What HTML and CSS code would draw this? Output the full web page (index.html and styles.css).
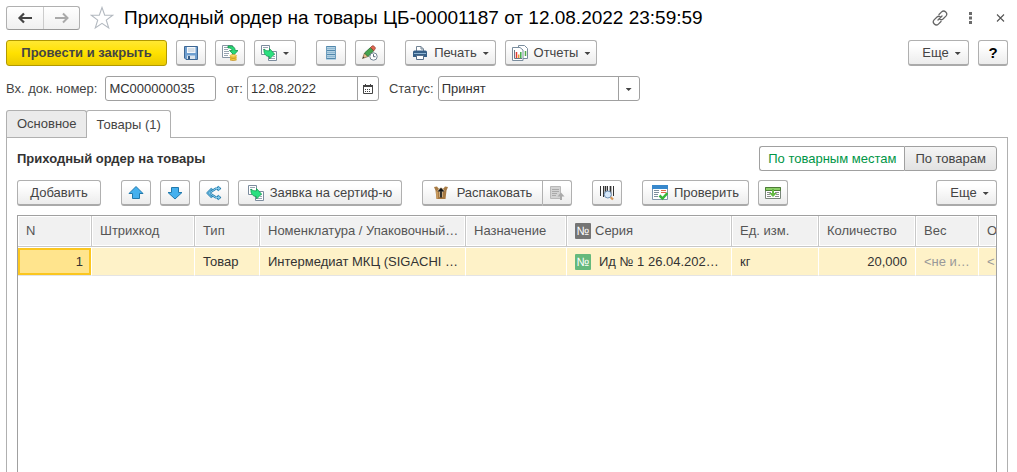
FILE: index.html
```html
<!DOCTYPE html>
<html lang="ru">
<head>
<meta charset="utf-8">
<title>Приходный ордер на товары</title>
<link rel="stylesheet" href="styles.css">
</head>
<body>
<svg class="sprites" aria-hidden="true">
  <symbol id="copy-docs" viewBox="0 0 16 16">
    <path d="M.5.5h8v9h-8zM7.500 6.500h8v9h-8z" fill="#fff" stroke="#7c8c9e"/>
    <path d="M2 2.500h5M2 4.500h2M12 9.500h2M12 11.500h2M9 13.500h5" stroke="#9aa7b4"/>
    <path d="M3 4c1.500 1.500 3 2 5.500 1.800V3.500l5 5.500-5 5v-2.500c-4 0-6-3-5.500-7.500z" fill="#2be080" stroke="#159c50" stroke-width=".8"/>
  </symbol>
</svg>

<header class="title-bar">
  <div class="nav">
    <button class="nav-btn" aria-label="Назад"><svg width="16" height="12" viewBox="0 0 16 12"><path d="M2.500 6H15M7 1.500L2.500 6 7 10.500" fill="none" stroke="#444" stroke-width="2.200"/></svg></button>
    <button class="nav-btn" aria-label="Вперед"><svg width="16" height="12" viewBox="0 0 16 12"><path d="M1 6h12.500M9 1.500L13.500 6 9 10.500" fill="none" stroke="#aaa" stroke-width="2"/></svg></button>
  </div>
  <button class="plain star" aria-label="Избранное"><svg width="24" height="24" viewBox="0 0 24 24"><path d="M12 1.500l2.700 7.700h8l-6.400 4.900 2.400 7.800L12 17.300l-6.700 4.600 2.400-7.800L1.300 9.200h8z" fill="#fff" stroke="#b3b9c0" stroke-width="1.100"/></svg></button>
  <h1 class="title">Приходный ордер на товары ЦБ-00001187 от 12.08.2022 23:59:59</h1>
  <div class="window-tools">
    <button class="plain" aria-label="Ссылка"><svg width="16" height="16" viewBox="0 0 16 16"><g fill="none" stroke="#666" stroke-width="1.300" stroke-linecap="round"><path d="M7 4.500l2.600-2.600c2.700-2.600 6.800 1.400 4.300 4.200L11 9c-1 .8-2 .9-3 .5M9 11.500l-2.600 2.600c-2.700 2.600-6.800-1.400-4.300-4.200L5 7c1-.8 2-.9 3-.5M6 10l4-4"/></g></svg></button>
    <button class="plain" aria-label="Меню"><svg width="16" height="16" viewBox="0 0 16 16"><path d="M7 2h3v3H7zM7 6.500h3v3H7zM7 11h3v3H7z" fill="#6b6b6b"/></svg></button>
    <button class="plain" aria-label="Закрыть"><svg width="16" height="16" viewBox="0 0 16 16"><path d="M5 4.500l7 7M12 4.500l-7 7" stroke="#555" stroke-width="1.100"/></svg></button>
  </div>
</header>

<div class="toolbar">
  <button class="btn primary">Провести и закрыть</button>
  <button class="btn icon" aria-label="Записать"><svg width="16" height="16" viewBox="0 0 16 16"><path d="M1.500 1.500h13v13h-11.500l-1.500-1.500z" fill="#6f9fd0" stroke="#3d6794"/><path d="M4 2h8.500v6H4z" fill="#f6f9fc"/><path d="M5 4h6.500M5 6h6.500" stroke="#b6c4d2"/><path d="M4 10.500h8V14H4z" fill="#dbe4ed"/><path d="M5 11h2v3H5z" fill="#355b85"/></svg></button>
  <button class="btn icon" aria-label="Провести"><svg width="16" height="16" viewBox="0 0 16 16"><path d="M.5.500h10v12H.5z" fill="#fff" stroke="#8795a3"/><path d="M2 2.500h4M2 4.500h4M2 6.500h5M2 8.500h5M2 10.500h4" stroke="#98a5b1"/><path d="M6 1c4-.5 7 .5 7.200 4.500H16L11.800 10 7.500 5.500H10c0-2-1.500-2.800-4-2.500z" fill="#28d876" stroke="#139248" stroke-width=".8"/><path d="M8 10.500h6.500v4.800H8z" fill="#f6cf3f"/><ellipse cx="11.200" cy="10.800" rx="3.300" ry="1.200" fill="#ffe271" stroke="#c99720" stroke-width=".6"/><path d="M8 12.800q3.200 1.500 6.500 0M8 14.800q3.200 1.500 6.500 0" fill="none" stroke="#c08c1b" stroke-width=".8"/></svg></button>
  <button class="btn icon-drop" aria-label="Создать на основании"><svg width="16" height="16"><use href="#copy-docs"/></svg><i class="caret"></i></button>
  <button class="btn icon group" aria-label="Структура"><svg width="16" height="16" viewBox="0 0 16 16"><path d="M3 1h10v14H3z" fill="#b4d2e4"/><path d="M3 1.500h10M3 5.500h10M3 9.500h10M3 13.500h10" stroke="#5288ac"/><path d="M3 3.500h10M3 7.500h10M3 11.500h10" stroke="#8fb8d2"/><path d="M3.500 1v13M12.500 1v13" stroke="#6d9dbd"/></svg></button>
  <button class="btn icon" aria-label="История"><svg width="16" height="16" viewBox="0 0 16 16"><path d="M.5 13.500L2.500 8 6 11.500z" fill="#e8be8b" stroke="#79603d" stroke-width=".7"/><path d="M2.500 8L8.500 2.500l3.300 3.300L6 11.500z" fill="#45a44e" stroke="#27672e" stroke-width=".8"/><path d="M8.500 2.500L10 1q1-.8 2 .2l1 1q.8 1 0 1.900l-1.200 1.700z" fill="#df6752" stroke="#8f3829" stroke-width=".7"/><path d="M.5 13.500l1-2 1 1z" fill="#333"/><circle cx="11.500" cy="11.500" r="3.700" fill="#fff" stroke="#718394"/><path d="M11.500 9.200v2.500h2" fill="none" stroke="#566878"/></svg></button>
  <button class="btn group print"><svg width="16" height="16" viewBox="0 0 16 16"><path d="M4.500 6V1.500H9L11.500 4v2" fill="#fff" stroke="#718394"/><path d="M9 1.500V4h2.500" fill="none" stroke="#718394"/><path d="M1 7q0-1.500 1.500-1.500h11Q15 5.500 15 7v5H1z" fill="#365f87"/><path d="M2 8.500h12" stroke="#90b5d3"/><path d="M4.500 10.500h7v4h-7z" fill="#fff" stroke="#58708a"/></svg><span>Печать</span><i class="caret"></i></button>
  <button class="btn reports"><svg width="16" height="16" viewBox="0 0 16 16"><path d="M6.500.5h6l3 3v10h-9z" fill="#fff" stroke="#7a8d9e"/><path d="M13.500 6v5" stroke="#51a94a" stroke-width="1.500"/><path d="M.5 2.500h7.500l3 2.500v10.500H.5z" fill="#fff" stroke="#7a8d9e"/><path d="M2.500 5v8.500H10" fill="none" stroke="#6a7988"/><path d="M4.500 7v6" stroke="#e03b34" stroke-width="1.500"/><path d="M6.700 9.500V13" stroke="#e99732" stroke-width="1.500"/><path d="M8.800 7v6" stroke="#3eae48" stroke-width="1.500"/></svg><span>Отчеты</span><i class="caret"></i></button>
  <button class="btn more">Еще<i class="caret"></i></button>
  <button class="btn icon help">?</button>
</div>

<div class="fields">
  <label for="num">Вх. док. номер:</label>
  <input class="box num" id="num" type="text" value="МС000000035">
  <label class="date-label" for="date">от:</label>
  <span class="box combo date">
    <input id="date" type="text" value="12.08.2022">
    <button class="combo-btn" aria-label="Календарь"><svg width="10" height="10" viewBox="0 0 10 10"><path d="M.5 1.500h9v8h-9z" fill="#fff" stroke="#444"/><path d="M0 1h10v2H0z" fill="#444"/><path d="M2.500 0v2M7.500 0v2" stroke="#444"/><path d="M2 5.500h6M2 7.500h6" stroke="#444" stroke-dasharray="1 1"/></svg></button>
  </span>
  <label class="status-label" for="status">Статус:</label>
  <span class="box combo status">
    <select id="status"><option>Принят</option></select>
    <span class="combo-btn"><i class="caret"></i></span>
  </span>
</div>

<nav class="tabs">
  <button class="tab">Основное</button>
  <button class="tab active">Товары (1)</button>
</nav>

<main class="panel">
  <div class="panel-head">
    <h2 class="panel-title">Приходный ордер на товары</h2>
    <div class="toggle">
      <button class="toggle-btn on">По товарным местам</button>
      <button class="toggle-btn">По товарам</button>
    </div>
  </div>

  <div class="toolbar inner">
    <button class="btn add">Добавить</button>
    <button class="btn icon group" aria-label="Вверх"><svg width="16" height="16" viewBox="0 0 16 16"><path d="M8 1.500l7 7h-3.500v5h-7v-5H1z" fill="#45b0ee" stroke="#2079ad"/></svg></button>
    <button class="btn icon" aria-label="Вниз"><svg width="16" height="16" viewBox="0 0 16 16"><path d="M8 14L1 7.500h3.500v-5h7v5H15z" fill="#45b0ee" stroke="#2079ad"/></svg></button>
    <button class="btn icon" aria-label="Разбить строку"><svg width="16" height="16" viewBox="0 0 16 16"><g fill="none" stroke-linejoin="round"><path d="M13.500 3.500H10L3 8l7 4.500h3.500M6 3.500L1.500 8 6 12.500M11.500 1.500l2.500 2-2.500 2M11.500 10.500l2.500 2-2.500 2" stroke="#287fae" stroke-width="2.200"/><path d="M13.500 3.500H10L3 8l7 4.500h3.500M6 3.500L1.500 8 6 12.500M11.500 1.500l2.500 2-2.500 2M11.500 10.500l2.500 2-2.500 2" stroke="#8bd1f3" stroke-width=".9"/></g></svg></button>
    <button class="btn cert"><svg width="16" height="16"><use href="#copy-docs"/></svg><span>Заявка на сертиф-ю</span></button>
    <div class="split group">
      <button class="btn unpack"><svg width="16" height="16" viewBox="0 0 16 16"><path d="M1 2l3-.5 1.500 2h5l1.500-2 3 .5-1.500 3.500-1 8.500h-9l-1-8.500z" fill="#a77a43"/><path d="M3 6l2 1v6.500H3.500z" fill="#c99b60"/><path d="M8 12V5M5.500 6.500L8 4l2.500 2.500" fill="none" stroke="#e9d9bd" stroke-width="3"/><path d="M8 12.500V5M5.500 6.500L8 4l2.500 2.500" fill="none" stroke="#151515" stroke-width="1.700"/></svg><span>Распаковать</span></button>
      <button class="btn icon" disabled aria-label="Свернуть"><svg width="16" height="16" viewBox="0 0 16 16"><path d="M1.500 1.500h10v12h-10z" fill="#d3d3d3" stroke="#b9b9b9"/><path d="M3 4.500h7M3 6.500h7M3 8.500h5M3 10.500h4" stroke="#aaa"/><path d="M12 7.500l3.500 4h-2.500v3.500h-2v-3.500H8.500z" fill="#aaa"/></svg></button>
    </div>
    <button class="btn icon group" aria-label="Поиск по штрихкоду"><svg width="16" height="16" viewBox="0 0 16 16"><path d="M1.500 1v10M4.500 1v11M8.500 1v10M14.500 1v10" stroke="#333"/><path d="M6.500 1v10M11.500 1v10" stroke="#333" stroke-width="1.700"/><path d="M11.500 12l2.500 2.500" stroke="#d99857" stroke-width="2.200"/><circle cx="8.800" cy="9.500" r="3.500" fill="#d7e9fb" stroke="#7292b5"/></svg></button>
    <button class="btn group check"><svg width="16" height="16" viewBox="0 0 16 16"><path d="M.5 1.500h15v13H.5z" fill="#fff" stroke="#8096aa"/><path d="M0 0h16v4H0z" fill="#3788cc"/><path d="M2 5.500h5M2 7.500h5M2 9.500h4M2 11.500h4" stroke="#7e8e9d"/><path d="M9 5.500h5M9 7.500h5" stroke="#e36a4e"/><path d="M7.500 10.500l3 3 5-5.500" fill="none" stroke="#37b638" stroke-width="2.500"/></svg><span>Проверить</span></button>
    <button class="btn icon" aria-label="Заполнить"><svg width="16" height="16" viewBox="0 0 16 16"><path d="M.5 2.500h15v11H.5z" fill="#fff" stroke="#788678"/><path d="M.5 2.500h15v3H.5z" fill="#8ccf67" stroke="#4d7d37"/><path d="M2 7.500h4M2 9.500h3M2 11.500h4M10 7.500h4M11 9.500h3M10 11.500h4" stroke="#8d8d8d"/><path d="M7 4h2v4h3l-4 4-4-4h3z" fill="#65b944"/></svg></button>
    <button class="btn more">Еще<i class="caret"></i></button>
  </div>

  <div class="grid">
    <table>
      <colgroup><col class="c-n"><col class="c-code"><col class="c-type"><col class="c-name"><col class="c-use"><col class="c-series"><col class="c-unit"><col class="c-qty"><col class="c-weight"><col></colgroup>
      <thead>
        <tr><th>N</th><th>Штрихкод</th><th>Тип</th><th>Номенклатура / Упаковочный…</th><th>Назначение</th><th><span class="series"><span class="badge">№</span>Серия</span></th><th>Ед. изм.</th><th>Количество</th><th>Вес</th><th class="cut">О</th></tr>
      </thead>
      <tbody>
        <tr><td class="num-cell current">1</td><td></td><td>Товар</td><td>Интермедиат МКЦ (SIGACHI …</td><td></td><td><span class="series wide"><span class="badge green">№</span>Ид № 1 26.04.202…</span></td><td>кг</td><td class="num-cell">20,000</td><td class="muted">&lt;не и…</td><td class="muted cut">&lt;</td></tr>
      </tbody>
    </table>
  </div>
</main>
</body>
</html>
```
FILE: styles.css
```css
* { box-sizing: border-box; }

body {
  margin: 0;
  padding: 6px 9px 0 6px;
  height: 100vh;
  overflow: hidden;
  display: flex;
  flex-direction: column;
  background: #fff;
  color: #444;
  font: 13px/16px "Liberation Sans", Arial, sans-serif;
}

button, input, select { font: inherit; color: inherit; margin: 0; }
button { padding: 0; cursor: pointer; }
svg { display: block; flex: none; }
.sprites { position: absolute; width: 0; height: 0; }

.title-bar { display: flex; align-items: center; height: 24px; }
.nav {
  display: flex;
  height: 24px;
  border: 1px solid #b0b0b0;
  border-bottom-color: #999;
  border-radius: 3px;
  background: linear-gradient(#fff, #f0f0f0);
}
.nav-btn {
  width: 36px;
  border: 0;
  background: none;
  display: flex;
  align-items: center;
  justify-content: center;
}
.nav-btn + .nav-btn { border-left: 1px solid #ccc; }
.plain { border: 0; background: none; }
.star { margin-left: 10px; }
.title {
  margin: 0 0 0 10px;
  flex: 1;
  white-space: nowrap;
  color: #000;
  font-size: 19px;
  line-height: 24px;
  font-weight: 400;
}
.window-tools { display: flex; gap: 14px; }

.toolbar { display: flex; gap: 9px; margin-top: 10px; }
.btn {
  display: flex;
  align-items: center;
  justify-content: center;
  height: 26px;
  border: 1px solid #b0b0b0;
  border-bottom: 2px solid #aaa;
  border-radius: 3px;
  background: linear-gradient(#fff 20%, #ececec);
  white-space: nowrap;
}
.primary {
  width: 161px;
  border: 1px solid #b29a00;
  background: linear-gradient(#ffe833, #ffe100 50%, #ebcb00);
  font-weight: 700;
}
.icon { width: 30px; }
.icon-drop { width: 42px; gap: 6px; }
.group { margin-left: 11px; }
.print { width: 91px; gap: 6px; }
.reports { width: 92px; gap: 6px; }
.more { width: 61px; gap: 6px; margin-left: auto; padding-left: 6px; }
.help { color: #000; font-size: 15px; font-weight: 700; }
.caret {
  width: 6px;
  height: 3px;
  margin-top: 2px;
  background: #444;
  clip-path: polygon(0 0, 100% 0, 50% 100%);
}

.fields { display: flex; align-items: center; margin-top: 10px; }
.box {
  height: 25px;
  border: 1px solid #a0a0a0;
  border-radius: 3px;
  background: #fff;
  color: #333;
}
.num { width: 111px; padding: 0 3px; margin-left: 8px; }
.date-label { margin-left: 10px; }
.status-label { margin-left: 10px; }
.combo { display: flex; overflow: hidden; margin-left: 4px; }
.combo input, .combo select {
  flex: 1;
  min-width: 0;
  border: 0;
  padding: 0 3px;
  background: none;
  appearance: none;
  outline: 0;
}
.date { width: 132px; }
.status { width: 202px; }
.combo-btn {
  width: 21px;
  border: 0;
  border-left: 1px solid #a0a0a0;
  background: none;
  display: flex;
  align-items: center;
  justify-content: center;
}

.tabs { display: flex; margin-top: 9px; position: relative; }
.tab {
  height: 27px;
  padding: 0 9px 0 10px;
  border: 1px solid #b0b0b0;
  border-bottom: 0;
  border-radius: 3px 3px 0 0;
  background: #ebebeb;
}
.tab.active { height: 28px; margin: 0 0 -1px -1px; background: #fff; }

.panel {
  flex: 1;
  min-height: 0;
  display: flex;
  flex-direction: column;
  padding: 8px 10px 0;
  border: 1px solid #b0b0b0;
  border-bottom: 0;
}
.panel-head { display: flex; justify-content: space-between; align-items: center; }
.panel-title { margin: 0; font-size: 13px; line-height: 16px; color: #333; }
.toggle { display: flex; }
.toggle-btn {
  height: 25px;
  padding: 0 10px;
  border: 1px solid #a0a0a0;
  border-radius: 0 3px 3px 0;
  background: linear-gradient(#f5f5f5, #e2e2e2);
}
.toggle-btn.on {
  padding: 0 8px;
  border-right: 0;
  border-radius: 3px 0 0 3px;
  background: #fff;
  color: #009646;
}
.inner { margin-top: 9px; }
.add { width: 84px; }
.cert { width: 164px; gap: 6px; }
.split { display: flex; }
.unpack { width: 121px; gap: 8px; border-radius: 3px 0 0 3px; }
.split .icon { border-left: 0; border-radius: 0 3px 3px 0; width: 29px; }
.check { width: 107px; gap: 6px; }

.grid {
  flex: 1;
  min-height: 0;
  margin-top: 9px;
  overflow: hidden;
  border: 1px solid #a0a0a0;
  border-bottom: 0;
}
table { width: 100%; table-layout: fixed; border-collapse: separate; border-spacing: 0; }
.c-n { width: 74px; }
.c-code { width: 103px; }
.c-type { width: 65px; }
.c-name { width: 206px; }
.c-use { width: 101px; }
.c-series { width: 165px; }
.c-unit { width: 87px; }
.c-qty { width: 97px; }
.c-weight { width: 63px; }
th, td {
  padding: 0 4px 0 8px;
  text-align: left;
  white-space: nowrap;
  overflow: hidden;
  text-overflow: ellipsis;
}
th {
  height: 31px;
  font-weight: 400;
  color: #555;
  background: #f1f1f1;
  border-right: 1px solid #c8c8c8;
  border-bottom: 1px solid #c8c8c8;
  box-shadow: inset 0 0 0 1px #fff;
}
td {
  height: 29px;
  color: #333;
  background: #fef2c8;
  border-right: 1px solid #fff;
  border-top: 1px solid #fff;
  border-bottom: 1px solid #e4e4e4;
}
th.cut, td.cut { border-right: 0; padding-right: 0; text-overflow: clip; }
td.num-cell { padding-right: 8px; text-align: right; }
.current { background: #ffe48d; box-shadow: inset 0 0 0 2px #fbc61f; }
td.muted { color: #999; }
.series { display: flex; align-items: center; gap: 4px; }
.wide { gap: 8px; }
.badge {
  flex: none;
  width: 16px;
  height: 16px;
  border-radius: 1px;
  background: #757575;
  color: #fff;
  font-size: 12px;
  line-height: 16px;
  text-align: center;
}
.green { background: #65b97c; }
```
